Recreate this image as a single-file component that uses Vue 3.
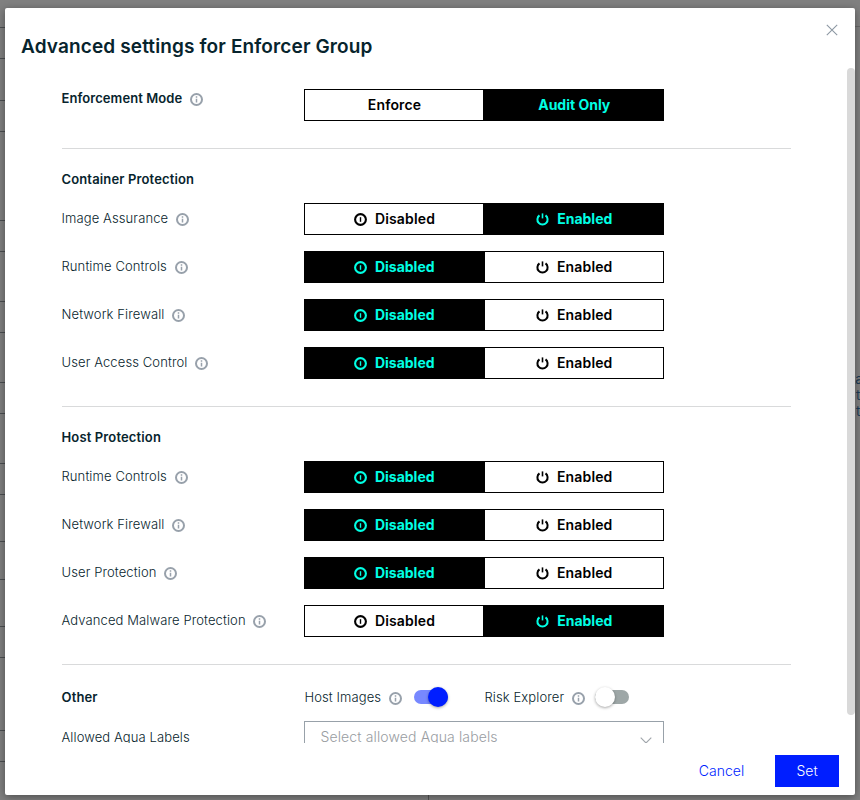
<script setup>
import { ref } from 'vue'

const sections = ref([
  {
    title: 'Container Protection',
    rows: [
      { label: 'Image Assurance', on: true },
      { label: 'Runtime Controls', on: false },
      { label: 'Network Firewall', on: false },
      { label: 'User Access Control', on: false },
    ],
  },
  {
    title: 'Host Protection',
    rows: [
      { label: 'Runtime Controls', on: false },
      { label: 'Network Firewall', on: false },
      { label: 'User Protection', on: false },
      { label: 'Advanced Malware Protection', on: true },
    ],
  },
])
const mode = ref('audit')
const hostImages = ref(true)
const riskExplorer = ref(false)
const tableLines = [27, 58, 100, 131, 220, 251, 301, 332, 382, 413, 463, 494, 541, 579, 626, 657, 730, 761]
</script>

<template>
  <div class="page">
    <svg class="backdrop" width="860" height="800">
      <rect v-for="y in tableLines" :key="y" x="0" :y="y" width="6" height="1" fill="#4b4e51" />
      <rect x="854" y="26" width="6" height="1" fill="#686868" />
      <rect x="428" y="794" width="1" height="6" fill="#555" />
    </svg>
    <div class="behind"><span>ta</span><span>t</span><span>t</span></div>
    <div class="modal">
      <svg class="close" width="12" height="12" viewBox="0 0 12 12"><path d="M.8.8l10.4 10.4M11.2.8L.8 11.2" stroke="#8d98a3" stroke-width="1.1" fill="none" /></svg>
      <h1>Advanced settings for Enforcer Group</h1>
      <div class="body">
        <div class="row mode">
          <div class="label strong">Enforcement Mode
            <svg class="info" viewBox="0 0 13 13"><circle cx="6.5" cy="6.5" r="5.5" /><path d="M6.5 5.7v3.8M6.5 3.3v1.4" /></svg>
          </div>
          <div class="switch">
            <button :class="{ active: mode === 'enforce' }" @click="mode = 'enforce'">Enforce</button>
            <button :class="{ active: mode === 'audit' }" @click="mode = 'audit'">Audit Only</button>
          </div>
        </div>
        <section v-for="s in sections" :key="s.title">
          <h2>{{ s.title }}</h2>
          <div v-for="r in s.rows" :key="r.label" class="row">
            <div class="label">{{ r.label }}
              <svg class="info" viewBox="0 0 13 13"><circle cx="6.5" cy="6.5" r="5.5" /><path d="M6.5 5.7v3.8M6.5 3.3v1.4" /></svg>
            </div>
            <div class="switch">
              <button :class="{ active: !r.on }" @click="r.on = false">
                <svg class="glyph off" viewBox="0 0 13 13"><circle cx="6.5" cy="6.5" r="5.4" stroke-width="2.1" /><path d="M6.5 4.2v4.6" stroke-width="1.4" /></svg>Disabled
              </button>
              <button :class="{ active: r.on }" @click="r.on = true">
                <svg class="glyph on" viewBox="0 0 13 13"><path d="M3.5 2.4A5.1 5.1 0 1 0 9.5 2.4" stroke-width="2" /><path d="M6.5.4v5" stroke-width="1.6" /></svg>Enabled
              </button>
            </div>
          </div>
        </section>
        <section class="other">
          <div class="other-row">
            <h2>Other</h2>
            <div class="option">Host Images
              <svg class="info" viewBox="0 0 13 13"><circle cx="6.5" cy="6.5" r="5.5" /><path d="M6.5 5.7v3.8M6.5 3.3v1.4" /></svg>
              <span class="toggle" :class="{ checked: hostImages }" @click="hostImages = !hostImages"><i></i></span>
            </div>
            <div class="option">Risk Explorer
              <svg class="info" viewBox="0 0 13 13"><circle cx="6.5" cy="6.5" r="5.5" /><path d="M6.5 5.7v3.8M6.5 3.3v1.4" /></svg>
              <span class="toggle" :class="{ checked: riskExplorer }" @click="riskExplorer = !riskExplorer"><i></i></span>
            </div>
          </div>
          <div class="row">
            <div class="label allowed">Allowed Aqua Labels</div>
            <div class="select"><span>Select allowed Aqua labels</span>
              <svg width="12" height="7" viewBox="0 0 12 7"><path d="M.7.7L6 6 11.3.7" fill="none" stroke="#a0a5ab" stroke-width="1.1" /></svg>
            </div>
          </div>
        </section>
        <div class="thumb"></div>
      </div>
      <footer>
        <button class="cancel">Cancel</button>
        <button class="set">Set</button>
      </footer>
    </div>
  </div>
</template>

<style>
body { margin: 0; overflow: hidden; }
</style>

<style scoped>
* { box-sizing: border-box; }
.page { position: relative; width: 860px; height: 800px; padding: 8px 5px 5px; background: #808080; overflow: hidden; font-family: Inter, "Liberation Sans", sans-serif; font-optical-sizing: none; color: #07242d; }
.backdrop { position: absolute; left: 0; top: 0; }
.behind { position: absolute; left: 851px; top: 371px; width: 12px; display: flex; flex-direction: column; font-size: 13px; line-height: 16px; color: #1c3a55; }
.behind span + span { padding-left: 5px; }
.modal { position: relative; display: flex; flex-direction: column; width: 850px; height: 787px; background: #fff; border-radius: 2px; box-shadow: 0 2px 9px rgba(0, 0, 0, .4); }
.close { position: absolute; right: 17px; top: 16px; }
h1 { margin: 0; padding: 27px 16px 0; height: 60px; font-size: 19px; line-height: 24px; font-weight: 600; letter-spacing: .13px; }
.body { position: relative; height: 675px; padding: 21px 64px 0 57px; overflow: hidden; }
.thumb { position: absolute; right: 0; top: 0; width: 8px; height: 647px; border-radius: 4px; background: #d9d9d9; }
.row { display: flex; height: 32px; margin-bottom: 16px; font-size: 13px; }
.mode { margin-bottom: 27px; }
.label { display: flex; align-items: center; gap: 8px; width: 242.5px; margin-left: -.5px; height: 30px; font-weight: 300; letter-spacing: .11px; white-space: nowrap; }
.strong { font-weight: 600; height: 18px; letter-spacing: .07px; }
.strong .info { margin-top: 3px; }
.allowed { height: 32px; }
.info { width: 13px; height: 13px; margin-top: 2px; fill: none; stroke: #98a1ab; stroke-width: 2; flex: none; }
.label .info { margin-left: -.3px; }
.info path { stroke-width: 1.5; }
section { border-top: 1px solid #d9dadb; padding-top: 20px; height: 258px; }
h2 { margin: 0 0 13px -.5px; height: 21px; font-size: 13px; line-height: 21px; font-weight: 600; letter-spacing: .14px; }
.switch { display: flex; width: 360px; height: 32px; border: 1px solid #000; }
.switch button { display: flex; align-items: center; justify-content: center; width: 179px; height: 30px; padding: 0 0 1px; border: 0; background: #fff; color: #000; font: 600 14px Inter, sans-serif; letter-spacing: .14px; }
.switch button.active { background: #000; color: #00ffe4; font-weight: 700; letter-spacing: 0; }
.switch .active:first-child { width: 180px; padding-right: 1.5px; }
.switch .active:last-child { width: 180px; padding-left: 2.5px; }
.switch button:first-child:not(.active) { width: 178px; padding-left: 1px; }
.switch button:last-child:not(.active) { width: 178px; padding-left: .5px; }
.glyph { width: 13px; height: 13px; margin: 1px 8px 0 0; fill: none; stroke: currentColor; flex: none; }
.other { padding-top: 17px; }
.other-row { display: flex; height: 31px; margin-bottom: 8px; align-items: center; }
.other-row h2 { width: 243px; margin: 0 0 0 -.5px; }
.option { display: flex; align-items: center; width: 180px; padding-bottom: 1px; font-size: 13px; font-weight: 300; letter-spacing: .1px; white-space: nowrap; }
.option .info { margin-left: 8px; margin-top: 3px; }
.toggle { display: flex; align-items: center; width: 34px; height: 14px; margin-left: 12px; border-radius: 7px; background: #9ea7a7; }
.option + .option .toggle { margin-left: 10px; }
.toggle i { width: 20px; height: 20px; flex: none; border-radius: 50%; background: #fff; box-shadow: 0 1px 3px rgba(0, 0, 0, .35); }
.toggle.checked { background: #7788ff; justify-content: flex-end; }
.toggle.checked i { background: #001eff; }
.select { display: flex; justify-content: space-between; width: 360px; height: 32px; padding: 0 11px 0 15.5px; border: 1px solid #98a1a9; font-size: 14px; line-height: 30px; color: #999da2; font-weight: 300; letter-spacing: .13px; }
.select svg { margin-top: 15px; }
footer { display: flex; justify-content: flex-end; padding: 12px 16px 0; gap: 15px; }
footer button { border: 0; padding: 0 0 1px; height: 32px; font: 300 14px Inter, sans-serif; }
.cancel { width: 77px; background: #fff; color: #001eff; }
.set { width: 64px; background: #001eff; color: #fff; }
</style>
